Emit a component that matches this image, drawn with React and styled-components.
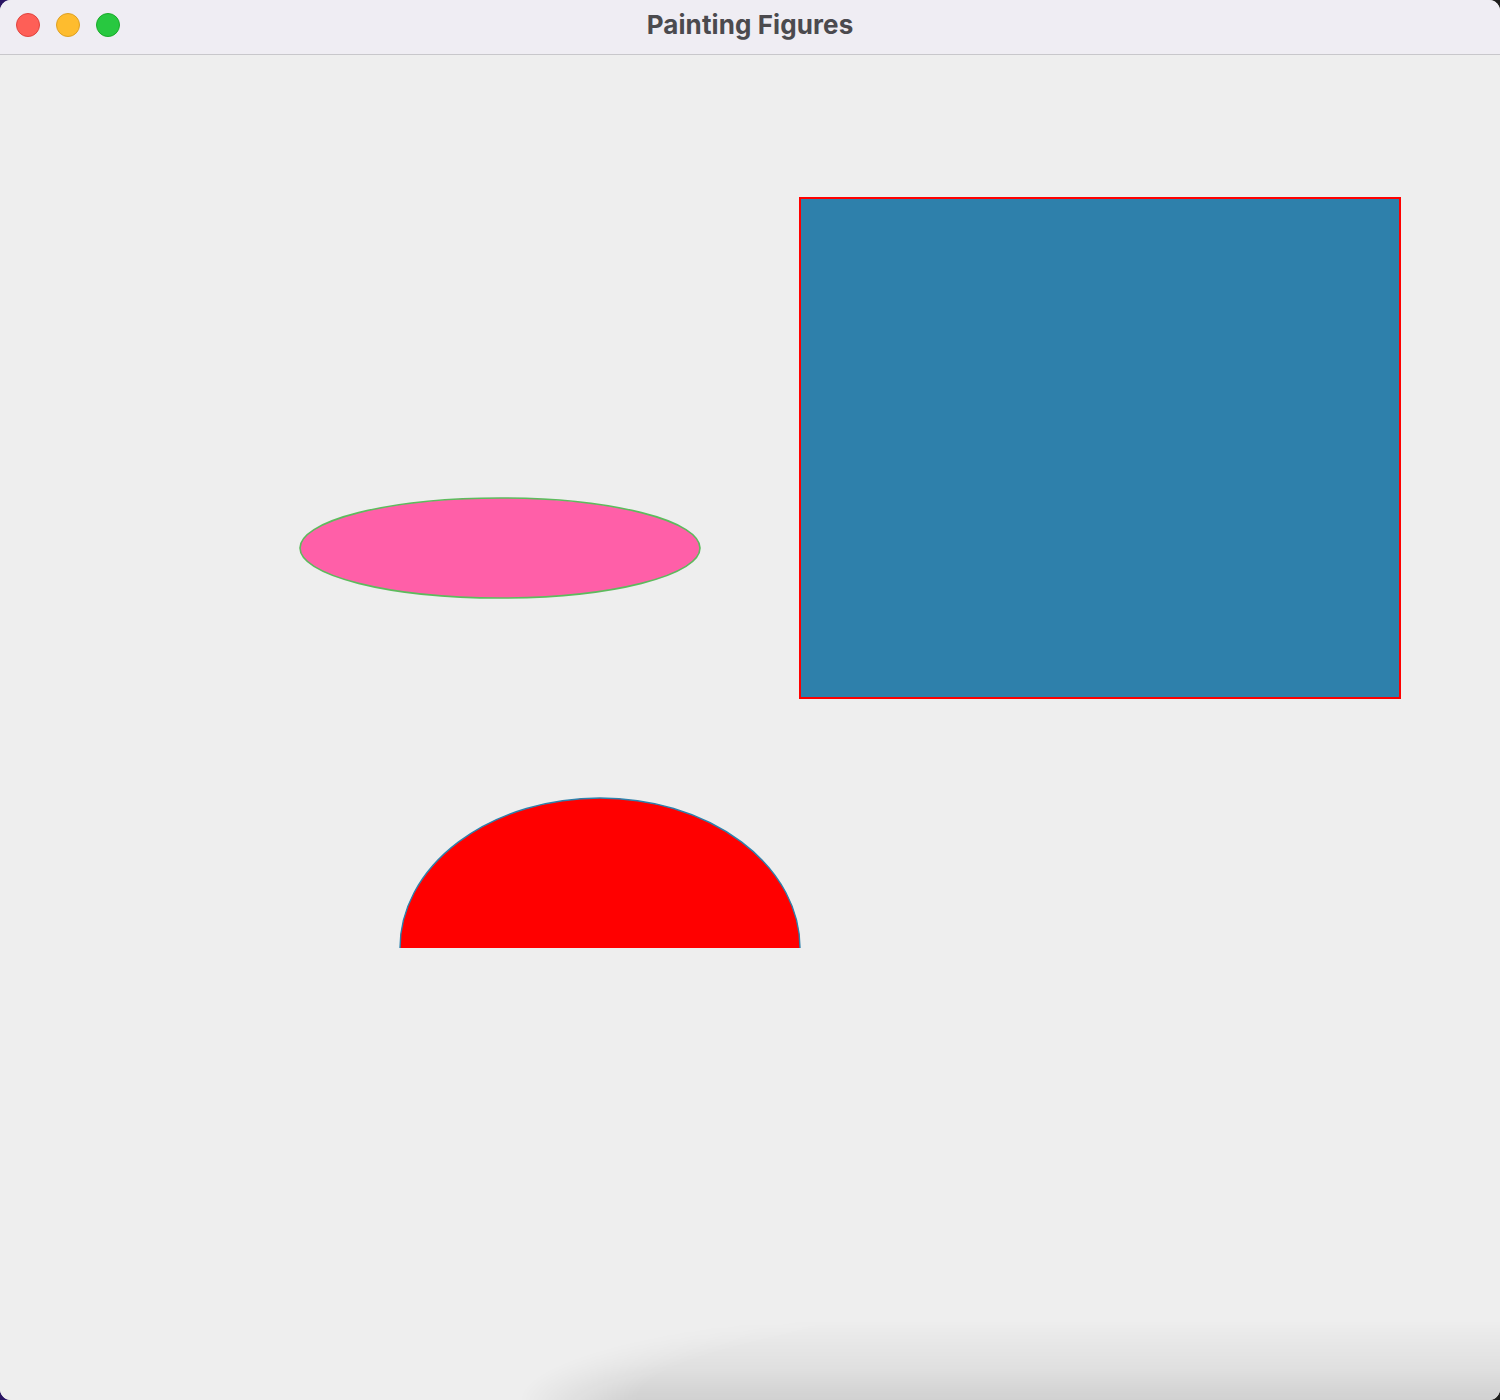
import React from "react";
import styled, { createGlobalStyle } from "styled-components";

const Global = createGlobalStyle`
  html, body { margin: 0; padding: 0; }
  body {
    width: 1500px;
    height: 1400px;
    overflow: hidden;
    background: linear-gradient(90deg, #2a1563 0%, #1b1038 40%, #111 70%, #1e1e1c 100%);
  }
`;

const Window = styled.div`
  width: 1500px;
  height: 1400px;
  border-radius: 11px;
  overflow: hidden;
  display: flex;
  flex-direction: column;
  background: #eeeeee;
  position: relative;
`;

const TitleBar = styled.div`
  height: 55px;
  flex: none;
  box-sizing: border-box;
  border-bottom: 1px solid #c8c7cb;
  background: #efedf3;
  display: flex;
  align-items: center;
  position: relative;
  padding: 0 0 4px 16px;
`;

const Lights = styled.div`
  display: flex;
  gap: 16px;
`;

const Light = styled.span`
  width: 24px;
  height: 24px;
  box-sizing: border-box;
  border-radius: 50%;
  background: ${(p) => p.$bg};
  border: 1px solid ${(p) => p.$edge};
`;

const Title = styled.div`
  position: absolute;
  left: 0;
  right: 0;
  top: 0;
  bottom: 5px;
  display: flex;
  align-items: center;
  justify-content: center;
  font-family: Inter, "Open Sans", sans-serif;
  font-weight: 700;
  font-size: 26px;
  letter-spacing: 0.1px;
  color: #4b4a4e;
  pointer-events: none;
`;

const Canvas = styled.div`
  flex: 1;
  position: relative;
  background: #eeeeee;
`;

const Drawing = styled.svg`
  display: block;
`;

const Shadow = styled.div`
  position: absolute;
  left: 520px;
  right: 0;
  bottom: 0;
  height: 80px;
  background: linear-gradient(to top, rgba(0,0,0,0.12), rgba(0,0,0,0.05) 45%, rgba(0,0,0,0));
  -webkit-mask-image: radial-gradient(ellipse 100% 160% at 100% 100%, #000 88%, transparent 100%);
  mask-image: radial-gradient(ellipse 100% 160% at 100% 100%, #000 88%, transparent 100%);
  pointer-events: none;
`;

export default function App() {
  return (
    <>
      <Global />
      <Window>
        <TitleBar>
          <Lights>
            <Light $bg="#fe5f57" $edge="#e0443e" />
            <Light $bg="#febc2e" $edge="#dea123" />
            <Light $bg="#28c840" $edge="#1aab29" />
          </Lights>
          <Title>Painting Figures</Title>
        </TitleBar>
        <Canvas>
          <Drawing width="1500" height="1345" viewBox="0 55 1500 1345">
            <rect x="800" y="198" width="600" height="500" fill="#2e80ab" stroke="#ff0000" strokeWidth="2" />
            <ellipse cx="500" cy="548" rx="200" ry="50" fill="#ff5fa8" stroke="#5dbb5d" strokeWidth="1.6" />
            <path d="M400 948 A200 150 0 0 1 800 948 Z" fill="#ff0000" />
            <path d="M400 948 A200 150 0 0 1 800 948" fill="none" stroke="#2e80ab" strokeWidth="1.4" />
          </Drawing>
          <Shadow />
        </Canvas>
      </Window>
    </>
  );
}
